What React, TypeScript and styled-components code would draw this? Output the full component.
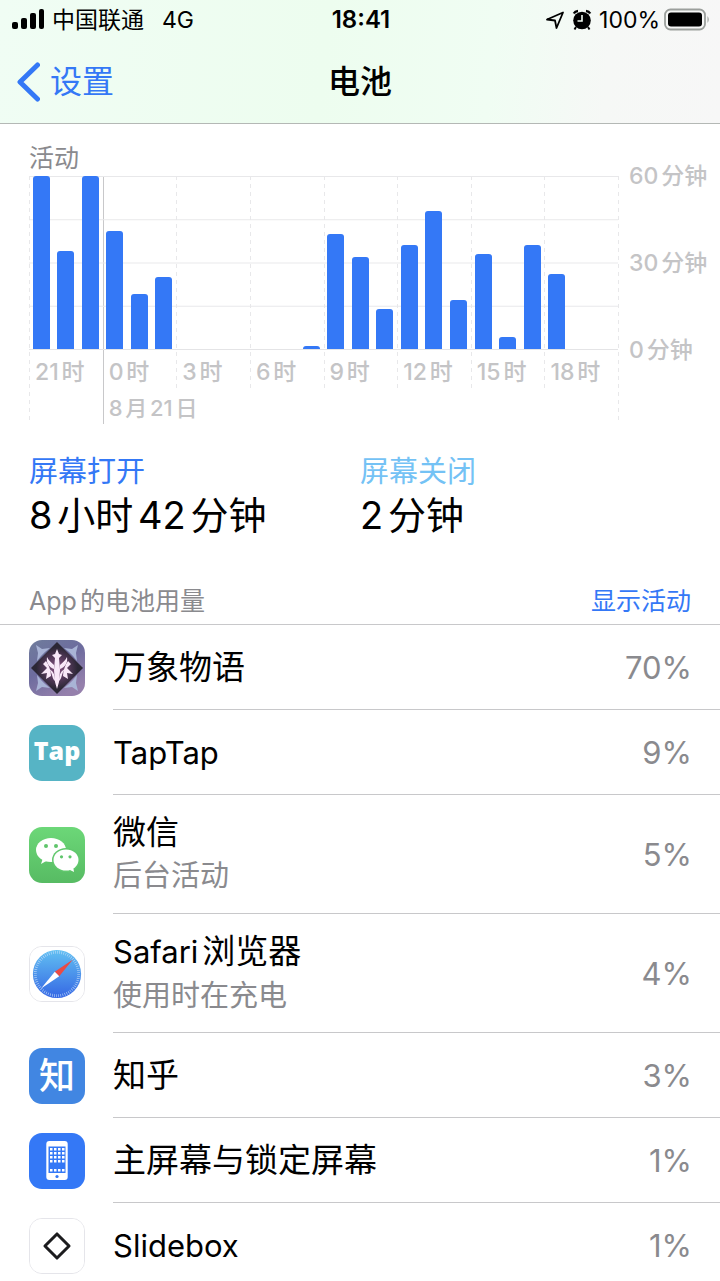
import React from "react";
import styled, { createGlobalStyle } from "styled-components";

type Usage = {
  latin?: string;
  name?: string;
  note?: string;
  percent: number;
  icon: React.ReactNode;
  outlined?: boolean;
};

type Period = {
  label: string;
  date?: string;
  line: "dashed" | "solid";
  long?: boolean;
  minutes: number[];
};

const periods: Period[] = [
  { label: "21时", line: "dashed", long: true, minutes: [60, 34, 60] },
  { label: "0时", date: "8月21日", line: "solid", long: true, minutes: [41, 19, 25] },
  { label: "3时", line: "dashed", minutes: [0, 0, 0] },
  { label: "6时", line: "dashed", minutes: [0, 0, 1] },
  { label: "9时", line: "dashed", minutes: [40, 32, 14] },
  { label: "12时", line: "dashed", minutes: [36, 48, 17] },
  { label: "15时", line: "dashed", minutes: [33, 4, 36] },
  { label: "18时", line: "dashed", minutes: [26, 0, 0] },
];

const MorimensIcon = () => (
  <svg viewBox="0 0 56 56" aria-hidden="true">
    <defs>
      <linearGradient id="sky" x1="0" y1="0" x2="0.6" y2="1">
        <stop offset="0" stopColor="#6f7c9c" />
        <stop offset="0.5" stopColor="#6d6c9e" />
        <stop offset="1" stopColor="#9580ac" />
      </linearGradient>
      <radialGradient id="glow">
        <stop offset="0" stopColor="#8a5684" />
        <stop offset="0.45" stopColor="#54395a" />
        <stop offset="0.8" stopColor="#2b2735" />
      </radialGradient>
    </defs>
    <rect width="56" height="56" fill="url(#sky)" />
    <g fill="#a9b4d6">
      <path d="M7 5 L13 9 L21 8 L16 12 L12 16 L8 21 L9 13 Z" />
      <path d="M49 5 L43 9 L35 8 L40 12 L44 16 L48 21 L47 13 Z" />
      <path d="M7 51 L13 47 L21 48 L16 44 L12 40 L8 35 L9 43 Z" />
      <path d="M49 51 L43 47 L35 48 L40 44 L44 40 L48 35 L47 43 Z" />
    </g>
    <path d="M28 2 L54 28 L28 54 L2 28 Z" fill="url(#glow)" />
    <g fill="#f8e8f8">
      <path d="M28 9 L30 14 L33 15 L30 18 L31 30 L30 42 L28 49 L26 42 L25 30 L26 18 L23 15 L26 14 Z" />
      <path d="M25 29 C20 27 17 23 18 17 C20 21 23 23 25 25 Z M31 29 C36 27 39 23 38 17 C36 21 33 23 31 25 Z" />
      <path d="M17 21 L14 24 L18 28 L12 34 L18 33 L17 39 L22 36 C22 31 20 25 17 21 Z" />
      <path d="M39 21 L42 24 L38 28 L44 34 L38 33 L39 39 L34 36 C34 31 36 25 39 21 Z" />
      <path d="M20 29 C24 31 26 34 26 41 C23 39 24 34 20 29 Z M36 29 C32 31 30 34 30 41 C33 39 32 34 36 29 Z" />
    </g>
  </svg>
);

const TapIcon = () => (
  <svg viewBox="0 0 56 56" aria-hidden="true">
    <rect width="56" height="56" fill="#56b4c5" />
    <TapText x="28" y="35" textAnchor="middle">
      Tap
    </TapText>
  </svg>
);

const WechatIcon = () => (
  <svg viewBox="0 0 56 56" aria-hidden="true">
    <defs>
      <linearGradient id="green" x1="0" y1="0" x2="0" y2="1">
        <stop offset="0" stopColor="#6cd778" />
        <stop offset="1" stopColor="#57bb63" />
      </linearGradient>
    </defs>
    <rect width="56" height="56" fill="url(#green)" />
    <path d="M14 31 L12 37 L19 33 Z" fill="#fff" />
    <ellipse cx="22" cy="23" rx="15" ry="12" fill="#fff" />
    <circle cx="17" cy="19" r="2" fill="#5fc56b" />
    <circle cx="27" cy="19" r="2" fill="#5fc56b" />
    <ellipse cx="37" cy="33" rx="14" ry="12" fill="#61c86d" />
    <path d="M39 42 L45 45 L44 39 Z" fill="#fff" />
    <ellipse cx="37" cy="33" rx="12.5" ry="10.5" fill="#fff" />
    <circle cx="32.5" cy="29.8" r="1.6" fill="#5fc56b" />
    <circle cx="41" cy="29.8" r="1.6" fill="#5fc56b" />
  </svg>
);

const SafariIcon = () => (
  <svg viewBox="0 0 56 56" aria-hidden="true">
    <defs>
      <linearGradient id="compass" x1="0" y1="0" x2="0" y2="1">
        <stop offset="0" stopColor="#62c0f2" />
        <stop offset="1" stopColor="#3567e4" />
      </linearGradient>
    </defs>
    <rect width="56" height="56" fill="#fff" />
    <circle cx="28" cy="28" r="25" fill="url(#compass)" />
    <circle cx="28" cy="28" r="22.5" fill="none" stroke="#c3dcf9" strokeWidth="3" strokeDasharray="0.6 1.6" />
    <path d="M44.5 13 L25.7 25.6 L30.3 30.4 Z" fill="#ea4a45" />
    <path d="M11.5 43 L25.7 25.6 L30.3 30.4 Z" fill="#fff" />
  </svg>
);

const ZhihuIcon = () => (
  <svg viewBox="0 0 56 56" aria-hidden="true">
    <rect width="56" height="56" fill="#4186e2" />
    <ZhiText x="28" y="41" textAnchor="middle">
      知
    </ZhiText>
  </svg>
);

const HomeScreenIcon = () => (
  <svg viewBox="0 0 56 56" aria-hidden="true">
    <rect width="56" height="56" fill="#3478f6" />
    <rect x="17.3" y="8" width="21.4" height="39" rx="3" fill="#fff" />
    <rect x="19.5" y="13.5" width="17" height="26.5" fill="#3478f6" />
    {[15, 19, 23, 27, 36].map((y) =>
      [21, 25, 29, 33].map((x) => (
        <rect key={`${x}-${y}`} x={x} y={y} width="2.5" height="2.5" fill="#fff" />
      ))
    )}
    <circle cx="28" cy="43.5" r="1.6" fill="#3478f6" />
  </svg>
);

const SlideboxIcon = () => (
  <svg viewBox="0 0 56 56" aria-hidden="true">
    <rect width="56" height="56" fill="#fff" />
    <path d="M28 15.5 L40.5 28 L28 40.5 L15.5 28 Z" fill="none" stroke="#1c1c1e" strokeWidth="3.1" strokeLinejoin="round" />
  </svg>
);

const AlarmIcon = () => (
  <svg width="20" height="22" viewBox="0 0 20 22" aria-hidden="true">
    <circle cx="10" cy="11.5" r="8.8" />
    <path d="M1.8 4.5 Q3 2.2 6 2 M18.2 4.5 Q17 2.2 14 2" fill="none" stroke="#000" strokeWidth="2.4" />
    <path d="M4 18 L2.5 20.5 M16 18 L17.5 20.5" stroke="#000" strokeWidth="2" />
    <path d="M10 6 V12 H5.5" fill="none" stroke="#f2fbf3" strokeWidth="1.6" />
  </svg>
);

const apps: Usage[] = [
  { name: "万象物语", percent: 70, icon: <MorimensIcon /> },
  { latin: "TapTap", percent: 9, icon: <TapIcon /> },
  { name: "微信", note: "后台活动", percent: 5, icon: <WechatIcon /> },
  { latin: "Safari", name: "浏览器", note: "使用时在充电", percent: 4, icon: <SafariIcon />, outlined: true },
  { name: "知乎", percent: 3, icon: <ZhihuIcon /> },
  { name: "主屏幕与锁定屏幕", percent: 1, icon: <HomeScreenIcon /> },
  { latin: "Slidebox", percent: 1, icon: <SlideboxIcon />, outlined: true },
];

const App = () => {
  return (
    <>
      <GlobalStyle />
      <Header>
        <StatusBar>
          <StatusSide>
            <svg width="33" height="22" viewBox="0 0 33 22" aria-hidden="true">
              <rect x="0" y="13" width="6" height="7" rx="2" />
              <rect x="9" y="9" width="6" height="11" rx="2" />
              <rect x="18" y="4" width="6" height="16" rx="2" />
              <rect x="27" y="0" width="5" height="20" rx="2" />
            </svg>
            <Carrier>中国联通</Carrier>
            <span>4G</span>
          </StatusSide>
          <Clock>18:41</Clock>
          <StatusSide $end>
            <svg width="20" height="20" viewBox="0 0 20 20" aria-hidden="true">
              <path d="M2 9.5 L18 2.5 L11.5 18 L10 10.5 Z" fill="none" stroke="#000" strokeWidth="1.8" strokeLinejoin="round" />
            </svg>
            <AlarmIcon />
            <Charge>
              <span>100%</span>
              <svg width="46" height="24" viewBox="0 0 46 24" aria-hidden="true">
                <rect x="1" y="1.5" width="40" height="20" rx="5.5" fill="none" stroke="#9b9f9c" strokeWidth="1.8" />
                <rect x="4" y="4.5" width="34" height="14" rx="3" />
                <path d="M43.5 8 Q46 11.5 43.5 15 Z" fill="#9b9f9c" />
              </svg>
            </Charge>
          </StatusSide>
        </StatusBar>
        <NavBar>
          <Back href="#settings">
            <svg width="24" height="40" viewBox="0 0 24 40" aria-hidden="true">
              <path d="M21.5 3 L4 20 L21.5 37" fill="none" stroke="#3478f6" strokeWidth="5" strokeLinecap="round" strokeLinejoin="round" />
            </svg>
            设置
          </Back>
          <Title>电池</Title>
        </NavBar>
      </Header>

      <main>
        <Activity>
          <ChartTitle>活动</ChartTitle>
          <Chart>
            <Plot>
              {periods.map((period) => (
                <Column key={period.label} $line={period.line} $long={period.long}>
                  <Bars>
                    {period.minutes.map((value, i) => (
                      <Bar key={i} style={{ height: `${(value / 60) * 100}%` }} />
                    ))}
                  </Bars>
                  <Hour>{period.label}</Hour>
                  {period.date && <Day>{period.date}</Day>}
                </Column>
              ))}
              <Edge />
            </Plot>
            <Scale>
              <span>60分钟</span>
              <span>30分钟</span>
              <span>0分钟</span>
            </Scale>
          </Chart>
          <Totals>
            <div>
              <TotalLabel $color="#3478f6">屏幕打开</TotalLabel>
              <TotalValue>8小时42分钟</TotalValue>
            </div>
            <div>
              <TotalLabel $color="#74c2f5">屏幕关闭</TotalLabel>
              <TotalValue>2分钟</TotalValue>
            </div>
          </Totals>
        </Activity>

        <SectionHead>
          <SectionTitle>App的电池用量</SectionTitle>
          <ShowButton type="button">显示活动</ShowButton>
        </SectionHead>
        <AppList>
          {apps.map((app, i) => (
            <Row key={i}>
              <AppIcon $outlined={app.outlined}>{app.icon}</AppIcon>
              <RowBody $tall={Boolean(app.note)}>
                <div>
                  <AppName>
                    {app.latin && <Latin>{app.latin}</Latin>}
                    {app.name}
                  </AppName>
                  {app.note && <Note>{app.note}</Note>}
                </div>
                <Percent>{app.percent}%</Percent>
              </RowBody>
            </Row>
          ))}
        </AppList>
      </main>
    </>
  );
};

const GlobalStyle = createGlobalStyle`
  * {
    box-sizing: border-box;
  }
  html {
    scrollbar-width: none;
  }
  body {
    margin: 0;
    background: #fff;
    color: #000;
    font-family: Inter, "Noto Sans CJK SC", sans-serif;
    text-autospace: normal;
  }
  svg {
    display: block;
    flex: none;
  }
`;

const Header = styled.header`
  background: linear-gradient(95deg, #f0fdf4 0%, #edfdef 45%, #f0fdf3 68%, #f6f8f6 84%, #f7f7f7 100%);
  border-bottom: 1px solid #b4b8b5;
`;

const StatusBar = styled.div`
  display: grid;
  grid-template-columns: 1fr auto 1fr;
  align-items: center;
  height: 40px;
  padding: 0 10px 0 12px;
  font-size: 23px;
  line-height: 24px;
`;

const StatusSide = styled.div<{ $end?: boolean }>`
  display: flex;
  align-items: center;
  justify-content: ${({ $end }) => ($end ? "flex-end" : "flex-start")};
  gap: 7px;
`;

const Carrier = styled.span`
  margin-right: 11px;
`;

const Charge = styled.div`
  display: flex;
  align-items: center;
  gap: 4px;
`;

const Clock = styled.time`
  font-size: 24px;
  font-weight: 600;
`;

const NavBar = styled.nav`
  display: grid;
  grid-template-columns: 1fr auto 1fr;
  align-items: center;
  height: 83px;
  padding: 0 16px;
  line-height: 40px;
`;

const Back = styled.a`
  display: flex;
  align-items: center;
  gap: 10px;
  color: #3478f6;
  font-size: 32px;
  text-decoration: none;
`;

const Title = styled.h1`
  margin: 0;
  font-size: 32px;
  font-weight: 500;
`;

const Activity = styled.section`
  padding: 16px 0 0 29px;
`;

const ChartTitle = styled.h2`
  margin: 0;
  color: #8a8a8e;
  font-size: 25px;
  font-weight: 400;
  line-height: 36px;
`;

const Chart = styled.div`
  display: flex;
  align-items: flex-start;
  color: #c4c4c6;
  font-size: 23px;
  font-weight: 500;
  white-space: nowrap;
`;

const Plot = styled.div`
  display: flex;
  flex: 1;
  align-items: flex-start;
`;

const dashes = "repeating-linear-gradient(#e8e8ea 0 4px, transparent 4px 8px)";

const Column = styled.div<{ $line: "dashed" | "solid"; $long?: boolean }>`
  flex: 1 1 0;
  width: 0;
  height: ${({ $long }) => ($long ? "248px" : "216px")};
  background: ${({ $line }) => ($line === "solid" ? "linear-gradient(#c8c8ca, #c8c8ca)" : dashes)};
  background-size: 1px 100%;
  background-repeat: no-repeat;
`;

const Edge = styled.div`
  width: 1px;
  height: 248px;
  background: ${dashes};
`;

const Bars = styled.div`
  display: grid;
  grid-template-columns: repeat(3, 1fr);
  align-items: end;
  justify-items: center;
  height: 174px;
  border-bottom: 1px solid #e4e4e6;
  background: linear-gradient(#e8e8ea, #e8e8ea 1px, transparent 1px) 0 0 / 100% 25%;
`;

const Bar = styled.div`
  width: 17px;
  border-radius: 3px 3px 0 0;
  background: #3478f6;
`;

const Hour = styled.div`
  padding-left: 6px;
  line-height: 44px;
`;

const Day = styled.div`
  padding-left: 6px;
  font-size: 22px;
  line-height: 28px;
`;

const Scale = styled.div`
  display: flex;
  flex-direction: column;
  justify-content: space-between;
  width: 101px;
  height: 204px;
  margin-top: -15px;
  padding-left: 10px;
  line-height: 30px;
`;

const Totals = styled.div`
  display: grid;
  grid-template-columns: 1fr 1fr;
  margin-top: 27px;
  padding-right: 29px;
`;

const TotalLabel = styled.div<{ $color: string }>`
  color: ${({ $color }) => $color};
  font-size: 29px;
  line-height: 42px;
`;

const TotalValue = styled.div`
  font-size: 38px;
  line-height: 44px;
`;

const SectionHead = styled.div`
  display: flex;
  align-items: center;
  justify-content: space-between;
  margin-top: 44px;
  padding: 0 29px 3px;
  border-bottom: 1px solid #c8c8ca;
  line-height: 40px;
`;

const SectionTitle = styled.h2`
  margin: 0;
  color: #8a8a8e;
  font-size: 25px;
  font-weight: 400;
`;

const ShowButton = styled.button`
  padding: 0;
  border: 0;
  background: none;
  color: #3478f6;
  font: inherit;
  font-size: 25px;
`;

const AppList = styled.ul`
  margin: 0;
  padding: 0;
  list-style: none;
`;

const Row = styled.li`
  display: flex;
  align-items: center;
  padding-left: 29px;
`;

const AppIcon = styled.div<{ $outlined?: boolean }>`
  width: 56px;
  height: 56px;
  overflow: hidden;
  border: ${({ $outlined }) => ($outlined ? "1px solid #e5e5ea" : "0")};
  border-radius: 13px;
`;

const TapText = styled.text`
  fill: #fff;
  font-family: "Open Sans", sans-serif;
  font-size: 25px;
  font-weight: 800;
`;

const ZhiText = styled.text`
  fill: #fff;
  font-family: "Noto Sans CJK SC", sans-serif;
  font-size: 36px;
  font-weight: 500;
`;

const RowBody = styled.div<{ $tall: boolean }>`
  display: flex;
  flex: 1;
  align-items: center;
  justify-content: space-between;
  height: ${({ $tall }) => ($tall ? "119px" : "85px")};
  margin-left: 28px;
  padding-right: 28px;
  border-bottom: 1px solid #c8c8ca;

  ${Row}:last-child & {
    border-bottom-color: transparent;
  }
`;

const AppName = styled.div`
  font-size: 33px;
  line-height: 44px;
`;

const Latin = styled.span`
  font-size: 31px;
`;

const Note = styled.div`
  color: #8a8a8e;
  font-size: 29px;
  line-height: 44px;
`;

const Percent = styled.span`
  color: #8a8a8e;
  font-size: 31px;
`;

export default App;
